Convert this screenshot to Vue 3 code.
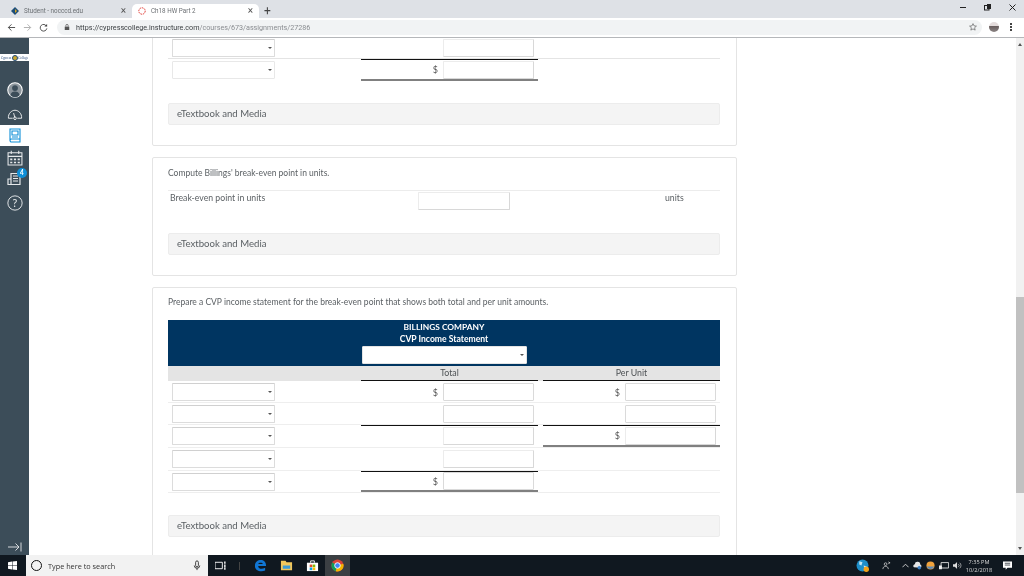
<script setup>
const rows = [
  { key: 1, totalDollar: true, unitDollar: true, unitInput: true },
  { key: 2, unitInput: true },
  { key: 3, totalRule: true, unitRule: true, unitDollar: true, unitInput: true, unitClose: true, tall: true, faint: true },
  { key: 4, tall: true, faint: true },
  { key: 5, totalRule: true, totalDollar: true, totalClose: true }
]
</script>

<template>
  <div class="screen">
    <header class="tabbar">
      <div class="tab">
        <svg class="fav" viewBox="0 0 10 10"><path d="M5 0l5 5-5 5-5-5z" fill="#1d4e79"/><path d="M5 2.500l2.500 2.500L5 7.500z" fill="#d9a521"/></svg>
        <span class="tab-title">Student - nocccd.edu</span>
        <span class="tab-x">×</span>
      </div>
      <div class="tab active">
        <svg class="fav" viewBox="0 0 10 10"><circle cx="5" cy="5" r="4" fill="none" stroke="#e0312b" stroke-width="1.200" stroke-dasharray="2 1"/></svg>
        <span class="tab-title">Ch18 HW Part 2</span>
        <span class="tab-x">×</span>
      </div>
      <span class="new-tab">+</span>
      <div class="win-controls">
        <span class="min"></span>
        <svg width="7" height="7" viewBox="0 0 7 7"><rect x="0.500" y="1.500" width="4.500" height="4.500" fill="none" stroke="#222"/><rect x="3" y="0" width="4" height="5" fill="#222"/></svg>
        <svg width="7" height="7" viewBox="0 0 7 7"><path d="M.5.5l6 6M6.500.5l-6 6" stroke="#222"/></svg>
      </div>
    </header>

    <div class="toolbar">
      <svg class="nav" viewBox="0 0 10 10"><path d="M9 5H1.500M5 1.500L1.500 5 5 8.500" fill="none" stroke="#444" stroke-width="1"/></svg>
      <svg class="nav" viewBox="0 0 10 10"><path d="M1 5h7.500M5 1.500L8.500 5 5 8.500" fill="none" stroke="#aaa" stroke-width="1"/></svg>
      <svg class="nav" viewBox="0 0 10 10"><path d="M8.300 3.500A3.700 3.700 0 1 0 8.700 6" fill="none" stroke="#444"/><path d="M9 1v3H6z" fill="#444"/></svg>
      <div class="omnibox">
        <svg class="lock" viewBox="0 0 8 8"><rect x="1" y="3.500" width="6" height="4.500" fill="#555"/><path d="M2.500 3.500V2a1.500 1.500 0 0 1 3 0v1.500" fill="none" stroke="#555"/></svg>
        <span class="url"><b>https://cypresscollege.instructure.com</b>/courses/673/assignments/27286</span>
        <svg class="star" viewBox="0 0 10 10"><path d="M5 .8l1.300 2.800 3 .3-2.300 2 .7 3L5 7.400 2.300 8.900l.7-3-2.300-2 3-.3z" fill="none" stroke="#555" stroke-width=".8"/></svg>
      </div>
      <span class="avatar"></span>
      <span class="kebab"><i></i><i></i><i></i></span>
    </div>

    <div class="main">
      <aside class="rail">
        <div class="logo"><span>Cypress</span><i></i><span>College</span></div>
        <svg class="rail-icon account" viewBox="0 0 17 17"><circle cx="8.500" cy="8.500" r="7.700" fill="#8d969d" stroke="#fff" stroke-width="1.100"/><circle cx="8.500" cy="6.500" r="3.100" fill="#3c4d59"/><path d="M3.500 14c.7-3 2.700-4 5-4s4.300 1 5 4a7 7 0 0 1-10 0z" fill="#3c4d59"/></svg>
        <svg class="rail-icon gauge" viewBox="0 0 17 17"><path d="M1.500 13C1 8 5 4.500 8.500 4.500S16 8 15.500 13H11M6 13H1.500M7 7.500l1.300 4.500" fill="none" stroke="#fff" stroke-width=".9"/><circle cx="8.500" cy="13" r="1.400" fill="none" stroke="#fff" stroke-width=".9"/></svg>
        <div class="rail-active">
          <svg width="12" height="15" viewBox="0 0 12 15"><path d="M1 1h10v10H2.500A1.500 1.500 0 0 0 1 12.500zM1 12.500A1.500 1.500 0 0 0 2.500 14H11v-3M3 3h6v4H3zM3 9h6" fill="none" stroke="#0e8fd8" stroke-width="1.100"/></svg>
        </div>
        <svg class="rail-icon cal" viewBox="0 0 15 15"><path d="M1 2.500h13V14H1zM1 6h13M4 .8v3M11 .8v3" fill="none" stroke="#e5e8ea" stroke-width="1"/><path d="M3 8h2v1.500H3zM6.500 8h2v1.500h-2zM10 8h2v1.500h-2zM3 11h2v1.500H3zM6.500 11h2v1.500h-2zM10 11h2v1.500h-2z" fill="#e5e8ea"/></svg>
        <div class="inbox">
          <svg class="rail-icon" viewBox="0 0 15 15"><path d="M4 1.500h9v11H1V7h3zM4 7v5.500M6 4h5M6 6.500h5M6 9h5" fill="none" stroke="#e5e8ea" stroke-width="1.200"/></svg>
          <span class="badge">4</span>
        </div>
        <svg class="rail-icon help" viewBox="0 0 15 15"><circle cx="7.500" cy="7.500" r="6.700" fill="none" stroke="#e5e8ea" stroke-width=".9"/><text x="7.500" y="11" text-anchor="middle" class="help-q">?</text></svg>
        <svg class="collapse" viewBox="0 0 14 10"><path d="M0 5h11M7.500 1.500L11 5 7.500 8.500M13 .5v9" fill="none" stroke="#e5e8ea" stroke-width=".9"/></svg>
      </aside>

      <main class="content">
        <div class="column">
          <section class="card first">
            <div class="row-a soft">
              <span class="select"></span>
              <div class="cell"><span class="field faint"></span></div>
            </div>
            <div class="row-a">
              <span class="select faint"></span>
              <div class="cell ruled closed"><span class="dollar">$</span><span class="field faint"></span></div>
            </div>
            <div class="media">eTextbook and Media</div>
          </section>

          <section class="card second">
            <p class="prompt">Compute Billings' break-even point in units.</p>
            <div class="break-row">
              <span class="break-label">Break-even point in units</span>
              <span class="field break-field faint"></span>
              <span class="units">units</span>
            </div>
            <div class="media">eTextbook and Media</div>
          </section>

          <section class="card third">
            <p class="prompt">Prepare a CVP income statement for the break-even point that shows both total and per unit amounts.</p>
            <div class="navy">
              <strong>BILLINGS COMPANY</strong>
              <strong class="sub">CVP Income Statement</strong>
              <span class="select wide"></span>
            </div>
            <div class="gray-head">
              <span></span>
              <span class="gh">Total</span>
              <span class="gh">Per Unit</span>
            </div>
            <div v-for="r in rows" :key="r.key" class="row" :class="{ tall: r.tall }">
              <span class="select"></span>
              <div class="cell" :class="{ ruled: r.totalRule, closed: r.totalClose }">
                <span v-if="r.totalDollar" class="dollar">$</span>
                <span class="field" :class="{ faint: r.faint }"></span>
              </div>
              <div class="cell" :class="{ ruled: r.unitRule, closed: r.unitClose }">
                <span v-if="r.unitDollar" class="dollar">$</span>
                <span v-if="r.unitInput" class="field" :class="{ faint: r.faint }"></span>
              </div>
            </div>
            <div class="media last">eTextbook and Media</div>
          </section>
        </div>
        <div class="scrollbar">
          <span class="arrow up"></span>
          <span class="thumb"></span>
          <span class="arrow down"></span>
        </div>
      </main>
    </div>

    <footer class="taskbar">
      <svg class="win" viewBox="0 0 9 9"><path d="M0 1.200L4 .6v3.600H0zM4.500.5L9 0v4.200H4.500zM0 4.800h4v3.600l-4-.6zM4.500 4.800H9V9l-4.500-.6z" fill="#fff"/></svg>
      <div class="search">
        <span class="ring"></span>
        <span class="search-text">Type here to search</span>
        <svg class="mic" viewBox="0 0 8 12"><rect x="2.500" y="1" width="3" height="6.500" rx="1.500" fill="none" stroke="#333"/><path d="M1 6a3 3 0 0 0 6 0M4 9v2" fill="none" stroke="#333"/></svg>
      </div>
      <svg class="task-view" viewBox="0 0 12 9"><path d="M0 1h8v7H0z" fill="none" stroke="#fff"/><path d="M10 0h1.500v2.500H10zM10 3.500h1.500V6H10zM10 6.500h1.500V9H10z" fill="#fff"/></svg>
      <span class="divider"></span>
      <svg class="app edge" viewBox="0 0 14 14"><path d="M1 7.500C1 3 4 1 7.500 1 11 1 13 3.500 13 7.500H4.500c0 3 3.500 4 7.500 2v3C7 14.500 1 12.500 1 7.500zM4.500 5.500h5C9.300 3.500 5 3.500 4.500 5.500z" fill="#1176d4"/></svg>
      <svg class="app" viewBox="0 0 14 14"><path d="M1 2h5l1 1.500h6V12H1z" fill="#f2c75c"/><path d="M3 7h8v3.500H3z" fill="#3c9bd6"/></svg>
      <svg class="app" viewBox="0 0 14 14"><path d="M1 4h12v9H1z" fill="#fff"/><path d="M5 4V2h4v2" fill="none" stroke="#fff"/><path d="M4 6h2.800v2.800H4z" fill="#e74c24"/><path d="M7.200 6H10v2.800H7.200z" fill="#7fba00"/><path d="M4 9.200h2.800V12H4z" fill="#00a4ef"/><path d="M7.200 9.200H10V12H7.200z" fill="#ffb900"/></svg>
      <div class="chrome-btn">
        <svg width="13" height="13" viewBox="0 0 14 14"><circle cx="7" cy="7" r="6.500" fill="#db4437"/><path d="M7 7L1.400 3.700A6.500 6.500 0 0 0 5 13.200z" fill="#0f9d58"/><path d="M7 7l6.200-2A6.500 6.500 0 0 1 5 13.200z" fill="#f4b400"/><circle cx="7" cy="7" r="3" fill="#4285f4" stroke="#fff"/></svg>
      </div>
      <div class="tray">
        <svg class="globe" viewBox="0 0 12 12"><circle cx="6" cy="6" r="5.500" fill="#1e8ec9"/><path d="M3 2l3 1-1 3-2-1zM7 6l3 1-2 3z" fill="#c6e6f3"/><circle cx="9.500" cy="9.500" r="2.500" fill="#f2a21a"/></svg>
        <svg class="person" viewBox="0 0 10 10"><circle cx="4" cy="3.500" r="1.500" fill="none" stroke="#ddd" stroke-width=".8"/><path d="M1 9c0-2 1.200-3 3-3s3 1 3 3M7 1l2 1-2 1" fill="none" stroke="#ddd" stroke-width=".8"/></svg>
        <svg class="chev" viewBox="0 0 8 5"><path d="M.5 4.500L4 1l3.500 3.500" fill="none" stroke="#ddd"/></svg>
        <svg class="tray-i" viewBox="0 0 10 10"><path d="M1 7a2 2 0 0 1 1-3.500A3 3 0 0 1 8 4a1.800 1.800 0 0 1 0 3.500z" fill="#e6e6e6"/><circle cx="7" cy="7.500" r="2" fill="#3b7fc4"/></svg>
        <svg class="tray-i" viewBox="0 0 10 10"><circle cx="5" cy="5" r="4.500" fill="#f0a23c"/><path d="M.8 6h8.400a4.500 4.500 0 0 1-8.400 0z" fill="#5b89b8"/></svg>
        <svg class="tray-i wide-i" viewBox="0 0 12 10"><path d="M2.500 1.500h9v6.500h-9z" fill="none" stroke="#eee"/><path d="M0 5h3.500v4.500H0z" fill="#eee"/></svg>
        <svg class="tray-i" viewBox="0 0 10 10"><path d="M0 3.500h2L4.500 1v8L2 6.500H0z" fill="#ddd"/><path d="M6 3.500a2 2 0 0 1 0 3M7.500 2a4 4 0 0 1 0 6" fill="none" stroke="#ddd" stroke-width=".7"/></svg>
        <div class="clock"><span>7:35 PM</span><span>10/2/2018</span></div>
        <svg class="notice" viewBox="0 0 10 10"><path d="M0 .5h10v7H5L3 9.800V7.500H0z" fill="#fff"/><path d="M2 2.500h6M2 4.500h6" stroke="#101820" stroke-width=".8"/></svg>
      </div>
    </footer>
  </div>
</template>

<style scoped>
.screen { width: 1024px; height: 576px; display: flex; flex-direction: column; overflow: hidden; background: #fff; font-family: Lato, "Liberation Sans", sans-serif; color: #5a5f63; filter: blur(0.3px); }

.tabbar { height: 18px; flex: none; background: #dee1e6; display: flex; align-items: flex-end; font-family: Roboto, "Liberation Sans", sans-serif; }
.tab { width: 127px; height: 14px; margin-left: 5px; display: flex; align-items: center; padding: 0 6px; box-sizing: border-box; }
.tab + .tab { margin-left: 0; }
.tab.active { background: #fff; border-radius: 5px 5px 0 0; }
.fav { width: 8px; height: 8px; flex: none; margin-right: 5px; }
.tab-title { flex: 1; font-size: 6.300px; color: #6b6f73; white-space: nowrap; }
.tab-x { font-size: 10px; line-height: 10px; color: #555; }
.new-tab { width: 12px; margin-left: 5px; font-size: 12px; line-height: 14px; color: #444; }
.win-controls { margin-left: auto; align-self: flex-start; display: flex; align-items: center; gap: 18px; height: 15px; padding-right: 8px; }
.min { width: 6px; height: 1px; background: #222; }

.toolbar { height: 20px; flex: none; box-sizing: border-box; background: #fff; border-bottom: 1px solid #b5b7ba; display: flex; align-items: center; padding: 0 0 1px 7px; font-family: Roboto, "Liberation Sans", sans-serif; }
.nav { width: 9px; height: 9px; margin-right: 7px; flex: none; }
.omnibox { width: 925px; margin-left: 2px; height: 15px; border-radius: 8px; background: #f1f3f4; display: flex; align-items: center; padding: 0 5px 0 7px; box-sizing: border-box; flex: none; }
.lock { width: 6px; height: 6px; margin-right: 6px; }
.url { font-size: 7.200px; color: #8a8d91; white-space: nowrap; }
.url b { font-weight: 400; color: #3c4043; }
.star { width: 8px; height: 8px; margin-left: auto; }
.avatar { width: 10px; height: 10px; border-radius: 50%; margin-left: 7px; flex: none; background: linear-gradient(#e4dcdc 45%, #6a5f5f 45%, #8b8484); }
.kebab { margin-left: 11px; display: flex; flex-direction: column; gap: 1.500px; }
.kebab i { width: 1.500px; height: 1.500px; background: #444; }

.main { flex: 1; min-height: 0; display: flex; }
.rail { width: 29px; flex: none; background: #3c4d59; display: flex; flex-direction: column; align-items: center; padding-top: 16px; box-sizing: border-box; }
.logo { width: 29px; height: 7px; background: #fff; display: flex; align-items: center; justify-content: center; gap: .5px; font: 3.200px "Liberation Serif", serif; color: #274a7a; white-space: nowrap; overflow: hidden; flex: none; }
.logo i { width: 6px; height: 6px; flex: none; background: #c9a62e; border-radius: 50%; border: 1px solid #1f4a7c; box-sizing: border-box; }
.rail-icon { width: 16px; height: 16px; flex: none; display: block; }
.account { margin-top: 21px; }
.gauge { margin-top: 8px; }
.rail-active { width: 29px; height: 21px; flex: none; background: #fff; display: flex; align-items: center; justify-content: center; margin-top: 3px; }
.cal { margin-top: 4px; }
.inbox { position: relative; margin-top: 6px; width: 15px; height: 15px; }
.inbox .rail-icon { width: 15px; height: 15px; }
.badge { position: absolute; left: 10px; top: -4px; width: 10px; height: 10px; border-radius: 50%; background: #0e8fd8; color: #fff; font-size: 6.500px; line-height: 10px; text-align: center; font-weight: 700; }
.help { margin-top: 8px; }
.help-q { font: 10px Lato, sans-serif; fill: #e5e8ea; }
.collapse { width: 14px; height: 10px; margin-top: auto; margin-bottom: 3px; }

.content { flex: 1; min-width: 0; display: flex; overflow: hidden; }
.column { width: 987px; height: 517px; overflow: hidden; padding-left: 123px; box-sizing: border-box; }
.card { width: 585px; box-sizing: border-box; background: #fff; border: 1px solid #e4e4e4; border-radius: 2px; padding: 0 16px 0 15px; margin-bottom: 12px; }
.first { height: 121px; margin-top: -13px; margin-bottom: 11px; padding-top: 11px; }
.second { height: 119px; margin-bottom: 11px; padding-top: 9px; }
.third { height: 280px; padding-top: 8px; }

.row-a { height: 22px; display: grid; grid-template-columns: 193px 177px; align-items: center; }
.row-a.soft { border-bottom: 1px solid #e4e4e4; height: 19px; padding-bottom: 2px; }
.row-a .cell { height: 100%; }
.select { display: block; width: 103px; height: 18px; box-sizing: border-box; margin-left: 4px; background: #fff; border: 1px solid #dcdcdc; border-top-color: #d0d0d0; position: relative; border-radius: 1px; }
.select.faint { border-color: #e8e8e8; }
.select::after { content: ""; position: absolute; right: 2px; top: 7px; border: 2px solid transparent; border-top: 2.500px solid #555; border-bottom: 0; }
.cell { display: flex; align-items: center; justify-content: flex-end; box-sizing: border-box; padding-right: 4px; border-top: 2px solid transparent; border-bottom: 2px solid transparent; height: 100%; }
.cell.ruled { border-top: 1px solid #111; }
.cell.closed { border-bottom: 2px solid #808080; }
.field { width: 91px; height: 18px; box-sizing: border-box; background: #fff; border: 1px solid #dadada; border-radius: 1px; flex: none; }
.field.faint { border-color: #ececec; border-right-color: #d8d8d8; border-bottom-color: #d8d8d8; }
.dollar { font-size: 9px; margin-right: 5px; color: #555; }

.media { height: 22px; box-sizing: border-box; margin-top: 22px; background: #f4f4f4; border: 1px solid #ececec; border-radius: 2px; padding-left: 8px; font-size: 9.600px; line-height: 20px; color: #5b6064; }

.prompt { margin: 0; font-size: 8.500px; line-height: 12px; color: #5c6165; white-space: nowrap; }
.break-row { margin-top: 11px; border-top: 1px solid #ececec; height: 20px; display: flex; align-items: flex-start; font-size: 8.700px; line-height: 13px; color: #5c6165; padding-left: 2px; }
.break-label { width: 248px; }
.break-field { width: 92px; height: 18px; margin-top: 1px; }
.units { margin-left: 155px; }

.navy { height: 46px; margin-top: 12px; box-sizing: border-box; padding-top: 1px; background: #003561; color: #fff; display: flex; flex-direction: column; align-items: center; }
.navy strong { font-size: 8.400px; line-height: 12px; font-weight: 700; }
.navy .sub { font-size: 8.600px; }
.select.wide { width: 165px; height: 18px; margin: 1px 0 0; border-color: #e4e4e4; }
.gray-head { height: 15px; background: #e4e4e4; display: grid; grid-template-columns: 193px 177px 5px 177px; font-size: 8.800px; line-height: 14px; color: #4d5154; }
.gray-head .gh { text-align: center; box-sizing: border-box; border-bottom: 1.500px solid #111; }
.gray-head .gh:last-child { grid-column: 4; }

.row { height: 22px; display: grid; grid-template-columns: 193px 177px 5px 177px; align-items: center; border-bottom: 1px solid #eee; box-sizing: border-box; }
.row.tall { height: 23px; }
.row .cell:last-child { grid-column: 4; }
.row:last-of-type { border-bottom: 0; }
.media.last { margin-top: 22px; }

.scrollbar { width: 8px; flex: none; background: #f1f1f1; display: flex; flex-direction: column; align-items: center; height: 517px; }
.arrow { width: 0; height: 0; border: 2.500px solid transparent; flex: none; }
.arrow.up { border-top: 0; border-bottom: 3px solid #555; margin-top: 5px; }
.arrow.down { border-bottom: 0; border-top: 3px solid #555; margin-bottom: 5px; }
.thumb { width: 100%; height: 196px; background: #c1c1c1; margin-top: 251px; margin-bottom: auto; flex: none; }

.taskbar { height: 21px; flex: none; background: #101820; display: flex; align-items: center; color: #fff; }
.win { width: 9px; height: 9px; margin-left: 8px; flex: none; }
.search { width: 182px; height: 21px; margin-left: 9px; background: #f2f2f2; display: flex; align-items: center; padding: 0 7px 0 5px; box-sizing: border-box; flex: none; }
.ring { width: 11px; height: 11px; border: 1.500px solid #111; border-radius: 50%; box-sizing: border-box; flex: none; }
.search-text { margin-left: 6px; font: 7.300px "Open Sans", "Liberation Sans", sans-serif; color: #333; white-space: nowrap; }
.mic { width: 8px; height: 11px; margin-left: auto; }
.task-view { width: 11px; height: 9px; margin-left: 7px; flex: none; }
.divider { width: 1px; height: 8px; margin-left: 13px; background: #444; flex: none; }
.app { width: 13px; height: 13px; flex: none; margin-left: 13px; }
.edge { margin-left: 14px; }
.chrome-btn { width: 25px; height: 21px; margin-left: 6px; background: #3b3f43; display: flex; align-items: center; justify-content: center; flex: none; }
.tray { margin-left: auto; display: flex; align-items: center; padding-right: 12px; }
.globe { width: 13px; height: 13px; }
.person { width: 9px; height: 9px; margin-left: 13px; }
.chev { width: 7px; height: 5px; margin-left: 11px; }
.tray-i { width: 9px; height: 9px; margin-left: 4px; }
.wide-i { width: 10px; }
.clock { width: 30px; margin-left: 2px; display: flex; flex-direction: column; align-items: center; font: 5.600px/8px "Open Sans", "Liberation Sans", sans-serif; color: #d8d8d8; }
.notice { width: 9px; height: 9px; margin-left: 9px; }
</style>

<style>
html, body { margin: 0; padding: 0; background: #fff; }
</style>
